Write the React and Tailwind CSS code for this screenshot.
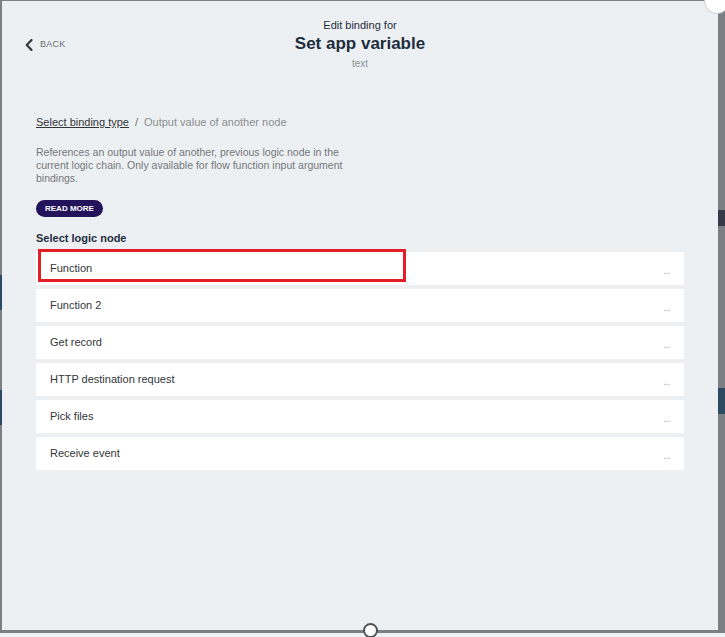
const nodes = ['Function', 'Function 2', 'Get record', 'HTTP destination request', 'Pick files', 'Receive event'];

export default function App() {
  return (
    <div className="relative w-[725px] h-[637px] overflow-hidden bg-[#7c7f83]" style={{ fontFamily: '"Liberation Sans", Arial, sans-serif' }}>
      {/* backdrop bits */}
      <div className="absolute left-0 top-[275px] w-[3px] h-[35px] bg-[#2b4a66]" />
      <div className="absolute left-0 top-[390px] w-[3px] h-[35px] bg-[#2b4a66]" />
      <div className="absolute right-0 top-[210px] w-[7px] h-[16px] bg-[#343a48]" />
      <div className="absolute right-0 top-[388px] w-[7px] h-[26px] bg-[#2e4a62]" />
      <div className="absolute left-0 right-0 bottom-0 h-[4px] bg-[#eef1f4]" />

      <div className="relative ml-[2px] mt-[1px] w-[716px] h-[629px] bg-[#edf0f3] flex flex-col">
        {/* header */}
        <div className="relative flex flex-col items-center pt-[17px]">
          <div className="text-[11px] leading-[14px] text-[#1d2d3e]">Edit binding for</div>
          <div className="mt-[1px] text-[17px] leading-[22px] font-semibold text-[#1d2d3e]">Set app variable</div>
          <div className="mt-[2px] text-[10px] leading-[14px] text-[#8b9095]">text</div>
          <div className="absolute left-[23px] top-[37px] flex items-center gap-[7px]">
            <svg width="8" height="12" viewBox="0 0 8 12" fill="none">
              <path d="M6.5 1 L1.8 6 L6.5 11" stroke="#32363a" strokeWidth="2.2" strokeLinecap="round" strokeLinejoin="round" />
            </svg>
            <span className="text-[9px] tracking-wide text-[#6a6d70]">BACK</span>
          </div>
        </div>

        <div className="px-[34px] mt-[44px]">
          <div className="flex items-center gap-[6px] text-[11px] leading-[14px]">
            <span className="underline text-[#32363a]">Select binding type</span>
            <span className="text-[#6a6d70]">/</span>
            <span className="text-[#8b8e91]">Output value of another node</span>
          </div>
          <p className="mt-[17px] w-[330px] text-[10.5px] leading-[13px] text-[#74777a]">
            References an output value of another, previous logic node in the current logic chain. Only available for flow function input argument bindings.
          </p>
          <button className="mt-[15px] h-[17px] px-[9px] rounded-full bg-[#22135a] text-white text-[8px] font-bold leading-none">
            READ MORE
          </button>
          <div className="mt-[13px] text-[11px] leading-[14px] font-semibold text-[#1d2d3e]">Select logic node</div>

          <div className="mt-[7px] flex flex-col gap-[4px]">
            {nodes.map((n, i) => (
              <div key={n} className="relative h-[33px] bg-white flex items-center pl-[14px] pr-[14px]">
                <span className="text-[11px] text-[#32363a]">{n}</span>
                <span className="ml-auto mt-[4px] text-[10px] text-[#a9adb1] tracking-tighter">...</span>
                {i === 0 && (
                  <div className="absolute left-[2px] top-[-3px] w-[368px] h-[33px] border-[3px] border-[#e41e26]" />
                )}
              </div>
            ))}
          </div>
        </div>
      </div>

      {/* bottom handle */}
      <div className="absolute left-[363px] top-[623px] w-[15px] h-[15px] rounded-full bg-white border-[2px] border-[#505458]" />
      {/* close button corner */}
      <div className="absolute left-[704px] top-[-12px] w-[26px] h-[26px] rounded-full bg-white border border-[#c8ccd0]" />
    </div>
  );
}
